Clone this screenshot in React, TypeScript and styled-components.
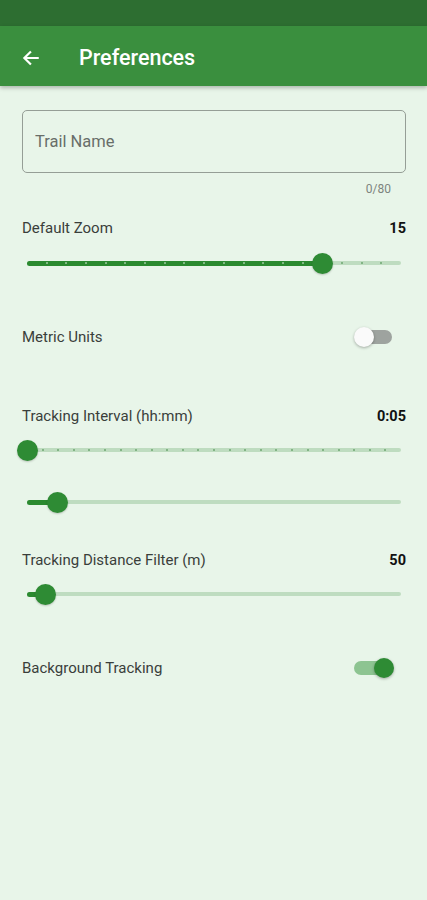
import styled, { createGlobalStyle } from "styled-components"

const GlobalStyle = createGlobalStyle`
    html, body {
        margin: 0;
        padding: 0;
        background: #e8f5e9;
    }
    body {
        font-family: Roboto, "Noto Sans", Arial, sans-serif;
        -webkit-font-smoothing: antialiased;
    }
`

const Screen = styled.div`
    width: 427px;
    min-height: 900px;
    background: #e8f5e9;
    display: flex;
    flex-direction: column;
`

const StatusBar = styled.div`
    height: 26px;
    background: #2d6e31;
`

const AppBar = styled.header`
    height: 60px;
    box-sizing: border-box;
    padding: 3px 0 0 19px;
    background: #3a8f3e;
    display: flex;
    align-items: center;
    box-shadow: 0 2px 4px rgba(0, 0, 0, 0.25);
    position: relative;
    z-index: 1;
`

const BackButton = styled.button`
    width: 24px;
    height: 24px;
    padding: 0;
    border: none;
    background: transparent;
    display: flex;
    align-items: center;
    justify-content: center;
    margin-right: 36px;
`

const Title = styled.h1`
    margin: 0;
    color: #ffffff;
    font-size: 21.5px;
    font-weight: 500;
`

const Content = styled.main`
    display: flex;
    flex-direction: column;
    padding: 24px 21px 0 22px;
`

const FieldBox = styled.div`
    height: 63px;
    border: 1px solid #959e96;
    border-radius: 5px;
    box-sizing: border-box;
    display: flex;
    align-items: center;
    padding-left: 12px;
`

const FieldInput = styled.input`
    border: none;
    background: transparent;
    outline: none;
    font-family: inherit;
    font-size: 16.5px;
    color: #333;
    width: 100%;
    padding: 0;

    &::placeholder {
        color: #686e69;
    }
`

const Counter = styled.div`
    text-align: right;
    font-size: 12px;
    color: #7d847e;
    padding-right: 15px;
    margin-top: 8px;
    height: 16px;
    line-height: 16px;
`

const LabelRow = styled.div<{ $top: number }>`
    display: flex;
    justify-content: space-between;
    align-items: center;
    margin-top: ${(p) => p.$top}px;
    height: 20px;
`

const Label = styled.span`
    font-size: 15px;
    color: #3a3e3b;
`

const Value = styled.span`
    font-size: 14.5px;
    font-weight: 700;
    color: #111;
`

const SliderWrap = styled.div<{ $top: number }>`
    margin-top: ${(p) => p.$top}px;
    height: 22px;
    padding: 0 5px;
    display: flex;
    align-items: center;
`

const Track = styled.div`
    position: relative;
    flex: 1;
    height: 4px;
    border-radius: 2px;
    background: #bedcc0;
`

const ActiveTrack = styled.div`
    position: absolute;
    left: 0;
    top: -0.5px;
    height: 5px;
    border-radius: 3px;
    background: #2b8a30;
`

const Tick = styled.span<{ $active: boolean }>`
    position: absolute;
    top: 1px;
    width: 2px;
    height: 2px;
    margin-left: -1px;
    border-radius: 50%;
    background: ${(p) => (p.$active ? "rgba(255,255,255,0.55)" : "rgba(46,125,50,0.55)")};
`

const Thumb = styled.span`
    position: absolute;
    top: 50%;
    width: 21px;
    height: 21px;
    margin: -10.5px 0 0 -10.5px;
    border-radius: 50%;
    background: #2e8b34;
    box-shadow: 0 1px 2px rgba(0, 0, 0, 0.2);
`

const SwitchRow = styled.div<{ $top: number }>`
    display: flex;
    justify-content: space-between;
    align-items: center;
    margin-top: ${(p) => p.$top}px;
    height: 24px;
`

const SwitchTrack = styled.div<{ $on: boolean }>`
    position: relative;
    width: 34px;
    height: 14px;
    border-radius: 7px;
    margin-right: ${(p) => (p.$on ? "18px" : "14px")};
    background: ${(p) => (p.$on ? "#8dc491" : "#9ea39f")};
`

const SwitchThumb = styled.span<{ $on: boolean }>`
    position: absolute;
    top: -3px;
    left: ${(p) => (p.$on ? "20px" : "-4px")};
    width: 20px;
    height: 20px;
    border-radius: 50%;
    background: ${(p) => (p.$on ? "#2e8b34" : "#fafafa")};
    box-shadow: 0 1px 3px rgba(0, 0, 0, 0.3);
`

type SliderProps = {
    value: number
    max: number
    ticks?: boolean
    top: number
}

const Slider = ({ value, max, ticks, top }: SliderProps) => {
    const pct = (value / max) * 100
    const marks = ticks ? Array.from({ length: max - 1 }, (_, i) => i + 1) : []

    return (
        <SliderWrap $top={top}>
            <Track>
                <ActiveTrack style={{ width: `${pct}%` }} />
                {marks.map((m) => (
                    <Tick key={m} $active={m < value} style={{ left: `${(m / max) * 100}%` }} />
                ))}
                <Thumb style={{ left: `${pct}%` }} />
            </Track>
        </SliderWrap>
    )
}

const Switch = ({ on }: { on: boolean }) => (
    <SwitchTrack $on={on}>
        <SwitchThumb $on={on} />
    </SwitchTrack>
)

export default function App() {
    return (
        <>
            <GlobalStyle />
            <Screen>
                <StatusBar />
                <AppBar>
                    <BackButton aria-label="Back">
                        <svg width="20" height="20" viewBox="0 0 24 24" fill="none">
                            <path d="M20 12H5M11 5l-7 7 7 7" stroke="#fff" strokeWidth="2.6" strokeLinecap="square" />
                        </svg>
                    </BackButton>
                    <Title>Preferences</Title>
                </AppBar>

                <Content>
                    <FieldBox>
                        <FieldInput placeholder="Trail Name" maxLength={80} />
                    </FieldBox>
                    <Counter>0/80</Counter>

                    <LabelRow $top={21}>
                        <Label>Default Zoom</Label>
                        <Value>15</Value>
                    </LabelRow>
                    <Slider value={15} max={19} ticks top={14} />

                    <SwitchRow $top={51}>
                        <Label>Metric Units</Label>
                        <Switch on={false} />
                    </SwitchRow>

                    <LabelRow $top={57}>
                        <Label>Tracking Interval (hh:mm)</Label>
                        <Value>0:05</Value>
                    </LabelRow>
                    <Slider value={0} max={24} ticks top={13} />
                    <Slider value={31} max={374} top={30} />

                    <LabelRow $top={37}>
                        <Label>Tracking Distance Filter (m)</Label>
                        <Value>50</Value>
                    </LabelRow>
                    <Slider value={18} max={374} top={13} />

                    <SwitchRow $top={51}>
                        <Label>Background Tracking</Label>
                        <Switch on />
                    </SwitchRow>
                </Content>
            </Screen>
        </>
    )
}
